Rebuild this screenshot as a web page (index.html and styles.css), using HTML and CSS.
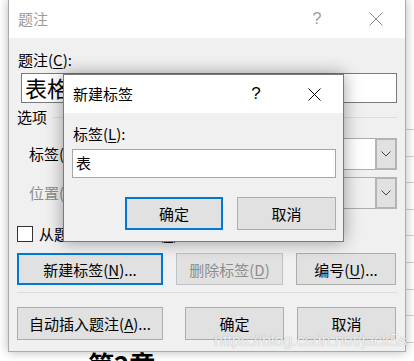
FILE: index.html
```html
<!DOCTYPE html>
<html lang="zh-CN">
  <head>
    <meta charset="UTF-8" />
    <meta name="viewport" content="width=device-width, initial-scale=1.0" />
    <title>题注</title>
    <link rel="stylesheet" href="styles.css">
  </head>
  <body>
    <!-- the Word document behind the dialogs -->
    <div class="doc">
      <div class="doc-main">
        <h1 class="doc-heading">第2章</h1>
      </div>
      <div class="doc-side">
        <div class="doc-row"></div>
        <div class="doc-row"></div>
        <div class="doc-row"></div>
        <div class="doc-row"></div>
        <div class="doc-row"></div>
        <div class="doc-row"></div>
        <div class="doc-row"></div>
        <div class="doc-row"></div>
        <div class="doc-row"></div>
      </div>
    </div>

    <!-- 题注 dialog (inactive) -->
    <div class="dialog caption-dialog inactive">
      <div class="titlebar">
        <span class="title">题注</span>
        <span class="help">?</span>
        <span class="close">
          <svg width="14" height="14" viewBox="0 0 14 14"><path d="M0.5 0.5 L13.5 13.5 M13.5 0.5 L0.5 13.5" stroke="currentColor" stroke-width="1" fill="none"/></svg>
        </span>
      </div>
      <div class="body">
        <div class="field-label">题注(<u>C</u>):</div>
        <div class="textbox big">表格</div>
        <div class="group-head">
          <span>选项</span>
          <span class="group-line"></span>
        </div>
        <div class="option-row">
          <span class="opt-label">标签(<u>L</u>):</span>
          <div class="combo">
            <span class="combo-field">表格</span>
            <span class="combo-btn">
              <svg width="10" height="6" viewBox="0 0 10 6"><path d="M0.5 0.5 L5 5 L9.5 0.5" stroke="#444" stroke-width="1" fill="none"/></svg>
            </span>
          </div>
        </div>
        <div class="option-row disabled">
          <span class="opt-label">位置(<u>P</u>):</span>
          <div class="combo">
            <span class="combo-field">所选项目下方</span>
            <span class="combo-btn">
              <svg width="10" height="6" viewBox="0 0 10 6"><path d="M0.5 0.5 L5 5 L9.5 0.5" stroke="#444" stroke-width="1" fill="none"/></svg>
            </span>
          </div>
        </div>
        <div class="check-row">
          <span class="checkbox"></span>
          <span>从题注中排除标签(<u>E</u>)</span>
        </div>
        <div class="btn-row">
          <button class="btn default w146">新建标签(<u>N</u>)...</button>
          <button class="btn w107" disabled>删除标签(<u>D</u>)</button>
          <button class="btn w100">编号(<u>U</u>)...</button>
        </div>
        <div class="sep"></div>
        <div class="btn-row second">
          <button class="btn w146">自动插入题注(<u>A</u>)...</button>
          <button class="btn w99 push">确定</button>
          <button class="btn w99">取消</button>
        </div>
      </div>
    </div>

    <!-- 新建标签 dialog (active, on top) -->
    <div class="dialog label-dialog">
      <div class="titlebar">
        <span class="title">新建标签</span>
        <span class="help">?</span>
        <span class="close">
          <svg width="13" height="13" viewBox="0 0 13 13"><path d="M0.5 0.5 L12.5 12.5 M12.5 0.5 L0.5 12.5" stroke="currentColor" stroke-width="1" fill="none"/></svg>
        </span>
      </div>
      <div class="body">
        <div class="field-label">标签(<u>L</u>):</div>
        <div class="textbox small">表</div>
        <div class="btn-row end">
          <button class="btn default w98">确定</button>
          <button class="btn w99">取消</button>
        </div>
      </div>
    </div>

    <div class="watermark">https://blog.csdn.net/jack5s</div>
  </body>
</html>
```

FILE: styles.css
```css
* {
  margin: 0;
  padding: 0;
  box-sizing: border-box;
}

body {
  width: 414px;
  height: 361px;
  overflow: hidden;
  position: relative;
  background: #fff;
  font-family: "Noto Sans CJK SC", "Microsoft YaHei", sans-serif;
  font-size: 15px;
  line-height: 20px;
  color: #000;
}

u {
  text-decoration: underline;
  text-underline-offset: 2px;
}

/* document behind */
.doc {
  display: flex;
  height: 361px;
  overflow: hidden;
}

.doc-main {
  flex: 1;
  padding: 349px 0 0 88px;
}

.doc-heading {
  font-size: 26px;
  line-height: 30px;
  font-weight: bold;
}

.doc-side {
  width: 8px;
  padding-top: 129px;
}

.doc-row {
  height: 26.6px;
  border-top: 1px solid #d0d0d0;
}

/* dialogs */
.dialog {
  position: absolute;
  display: flex;
  flex-direction: column;
  background: #f0f0f0;
  border: 1px solid #7a7a7a;
}

.caption-dialog {
  left: 8px;
  top: -1px;
  width: 398px;
  border-color: #aaaaaa;
  box-shadow: 0 0 10px rgba(0, 0, 0, 0.28);
}

.label-dialog {
  left: 63px;
  top: 74px;
  width: 281px;
  box-shadow: 0 0 16px rgba(0, 0, 0, 0.38);
}

.titlebar {
  height: 38px;
  background: #fff;
  display: flex;
  align-items: center;
  padding: 0 6px 0 9px;
}

.title {
  flex: 1;
}

.help {
  width: 20px;
  margin-right: 25px;
  text-align: center;
  font-family: "Liberation Sans", sans-serif;
  font-size: 17px;
}

.close {
  width: 46px;
  display: flex;
  justify-content: center;
  color: #000;
}

.inactive .titlebar {
  color: #9b9b9b;
}

.inactive .help {
  font-size: 16px;
  margin-right: 26px;
}

.inactive .close {
  color: #8a8a8a;
}

.body {
  display: flex;
  flex-direction: column;
}

.caption-dialog .body {
  padding: 12px 8px 11px 8px;
}

.label-dialog .body {
  padding: 11px 7px 11px 8px;
}

.field-label {
  padding-left: 1px;
}

.textbox {
  background: #fff;
  border: 1px solid #7a7a7a;
  white-space: nowrap;
  overflow: hidden;
}

.textbox.big {
  margin: 3px 0 0 4px;
  height: 30px;
  padding-left: 3px;
  font-size: 22px;
  line-height: 27px;
}

.textbox.small {
  margin-top: 5px;
  height: 29px;
  padding-left: 3px;
  line-height: 26px;
  border-color: #a6a6a6;
}

.group-head {
  margin-top: 4px;
  display: flex;
  align-items: center;
  gap: 6px;
}

.group-line {
  flex: 1;
  height: 1px;
  background: #dcdcdc;
}

.option-row {
  display: flex;
  align-items: center;
  padding-left: 12px;
  margin-top: 11px;
}

.option-row + .option-row {
  margin-top: 7px;
}

.opt-label {
  width: 71px;
}

.combo {
  flex: 1;
  display: flex;
  height: 32px;
}

.combo-field {
  flex: 1;
  background: #fff;
  border: 1px solid #adadad;
  border-right: none;
  padding-left: 4px;
  line-height: 30px;
}

.combo-btn {
  width: 22px;
  background: #e1e1e1;
  border: 2px solid #b4b4b4;
  display: flex;
  align-items: center;
  justify-content: center;
}

.disabled {
  color: #8d8d8d;
}

.disabled .combo-field {
  background: #f0f0f0;
  color: transparent;
}

.check-row {
  display: flex;
  align-items: center;
  gap: 6px;
  height: 16px;
  margin-top: 17px;
}

.checkbox {
  width: 16px;
  height: 16px;
  background: #fff;
  border: 1px solid #333;
}

.btn-row {
  display: flex;
  gap: 13px;
  margin-top: 11px;
}

.btn-row.second {
  margin-top: 14px;
}

.btn-row.end {
  justify-content: flex-end;
  gap: 14px;
  margin-top: 19px;
}

.btn {
  height: 32px;
  background: #e1e1e1;
  border: 1px solid #adadad;
  font-family: inherit;
  font-size: 15px;
  color: #000;
}

.btn-row.second .btn,
.btn-row.end .btn {
  height: 33px;
}

.btn.default {
  border: 2px solid #0078d7;
}

.btn:disabled {
  color: #8d8d8d;
  border-color: #c2c2c2;
}

.btn.push {
  margin-left: 9px;
}

.w146 { width: 146px; }
.w107 { width: 107px; }
.w100 { width: 100px; }
.w99 { width: 99px; }
.w98 { width: 98px; }

.sep {
  height: 1px;
  background: #dcdcdc;
  margin-top: 7px;
}

.watermark {
  position: absolute;
  left: 214px;
  top: 332px;
  font-family: "Liberation Sans", sans-serif;
  font-size: 16px;
  line-height: 18px;
  color: rgba(255, 255, 255, 0.85);
  text-shadow: 0 0 1px rgba(0, 0, 0, 0.35);
}
```
